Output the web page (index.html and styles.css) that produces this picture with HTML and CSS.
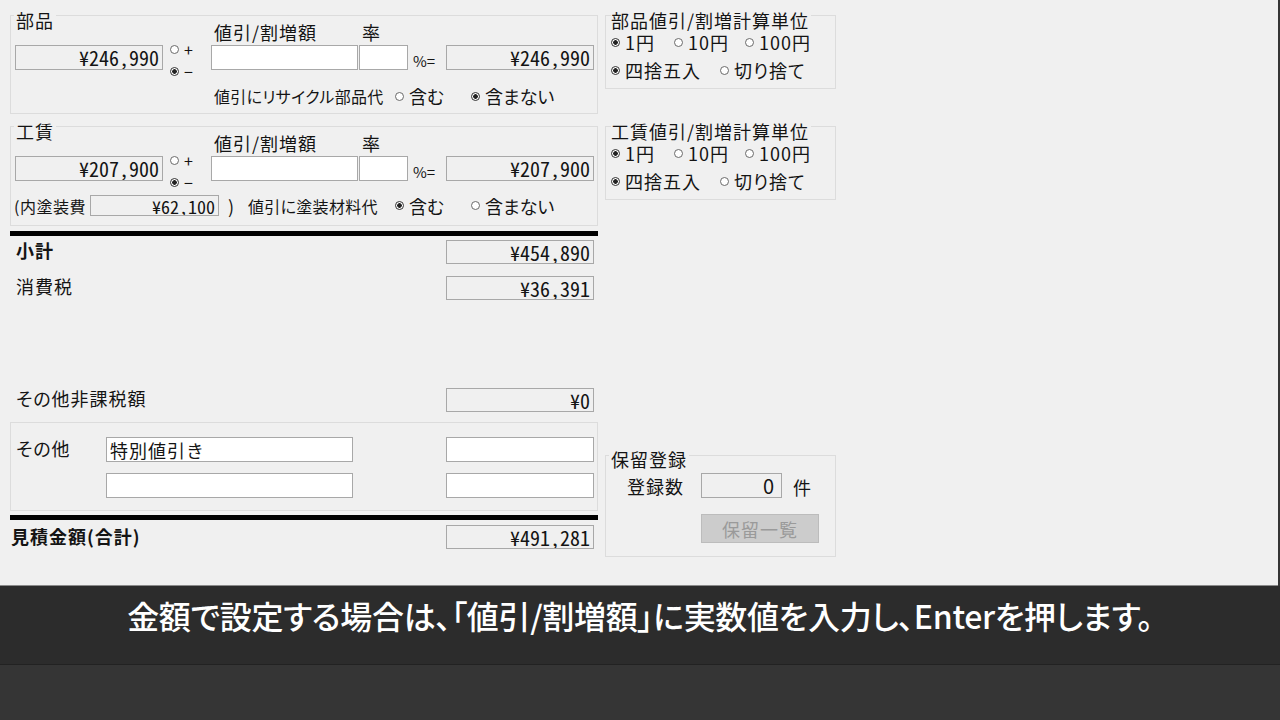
FILE: index.html
```html
<!DOCTYPE html>
<html lang="ja">
<head>
    <meta charset="UTF-8">
    <title>見積金額</title>
    <link rel="stylesheet" href="styles.css">
</head>
<body>
    <div class="app">
        <!-- 左側: 金額計算 -->
        <div class="main">
            <div class="group group-parts">
                <div class="head">
                    <div class="head-title"><span class="title">部品</span></div>
                    <span class="head-label label-amount">値引/割増額</span>
                    <span class="head-label">率</span>
                </div>
                <div class="calc-row">
                    <input class="field value first" type="text" value="¥246,990" readonly>
                    <div class="sign">
                        <label class="radio small"><input type="radio" name="parts-sign">+</label>
                        <label class="radio small"><input type="radio" name="parts-sign" checked>−</label>
                    </div>
                    <input class="field amount" type="text">
                    <input class="field rate" type="text">
                    <span class="pct">%=</span>
                    <input class="field value" type="text" value="¥246,990" readonly>
                </div>
                <div class="opt-row">
                    <span class="opt-label indent">値引にリサイクル部品代</span>
                    <label class="radio opt-first"><input type="radio" name="parts-recycle">含む</label>
                    <label class="radio"><input type="radio" name="parts-recycle" checked>含まない</label>
                </div>
            </div>

            <div class="group group-labor">
                <div class="head">
                    <div class="head-title"><span class="title">工賃</span></div>
                    <span class="head-label label-amount">値引/割増額</span>
                    <span class="head-label">率</span>
                </div>
                <div class="calc-row">
                    <input class="field value first" type="text" value="¥207,900" readonly>
                    <div class="sign">
                        <label class="radio small"><input type="radio" name="labor-sign">+</label>
                        <label class="radio small"><input type="radio" name="labor-sign" checked>−</label>
                    </div>
                    <input class="field amount" type="text">
                    <input class="field rate" type="text">
                    <span class="pct">%=</span>
                    <input class="field value" type="text" value="¥207,900" readonly>
                </div>
                <div class="opt-row paint-row">
                    <span class="paint-label">(内塗装費</span>
                    <input class="field value paint" type="text" value="¥62,100" readonly>
                    <span class="paren">)</span>
                    <span class="opt-label">値引に塗装材料代</span>
                    <label class="radio opt-first"><input type="radio" name="labor-paint" checked>含む</label>
                    <label class="radio"><input type="radio" name="labor-paint">含まない</label>
                </div>
            </div>

            <div class="rule"></div>
            <div class="sum-row">
                <span class="sum-label bold">小計</span>
                <input class="field value" type="text" value="¥454,890" readonly>
            </div>
            <div class="sum-row tax-row">
                <span class="sum-label">消費税</span>
                <input class="field value" type="text" value="¥36,391" readonly>
            </div>
            <div class="sum-row nontax-row">
                <span class="sum-label">その他非課税額</span>
                <input class="field value" type="text" value="¥0" readonly>
            </div>

            <div class="group group-other">
                <span class="other-label">その他</span>
                <div class="other-lines">
                    <div class="other-line">
                        <input class="field text" type="text" value="特別値引き">
                        <input class="field value blank" type="text">
                    </div>
                    <div class="other-line">
                        <input class="field text" type="text">
                        <input class="field value blank" type="text">
                    </div>
                </div>
            </div>

            <div class="rule rule-total"></div>
            <div class="sum-row total-row">
                <span class="total-label bold">見積金額(合計)</span>
                <input class="field value" type="text" value="¥491,281" readonly>
            </div>
        </div>

        <!-- 右側: 計算単位と保留 -->
        <div class="side">
            <div class="group unit-group">
                <div class="side-head"><span class="title">部品値引/割増計算単位</span></div>
                <div class="unit-row">
                    <label class="radio w-yen1"><input type="radio" name="parts-unit" checked>1円</label>
                    <label class="radio w-yen10"><input type="radio" name="parts-unit">10円</label>
                    <label class="radio"><input type="radio" name="parts-unit">100円</label>
                </div>
                <div class="unit-row">
                    <label class="radio w-round"><input type="radio" name="parts-round" checked>四捨五入</label>
                    <label class="radio"><input type="radio" name="parts-round">切り捨て</label>
                </div>
            </div>

            <div class="group unit-group unit-labor">
                <div class="side-head"><span class="title">工賃値引/割増計算単位</span></div>
                <div class="unit-row">
                    <label class="radio w-yen1"><input type="radio" name="labor-unit" checked>1円</label>
                    <label class="radio w-yen10"><input type="radio" name="labor-unit">10円</label>
                    <label class="radio"><input type="radio" name="labor-unit">100円</label>
                </div>
                <div class="unit-row">
                    <label class="radio w-round"><input type="radio" name="labor-round" checked>四捨五入</label>
                    <label class="radio"><input type="radio" name="labor-round">切り捨て</label>
                </div>
            </div>

            <div class="group hold-group">
                <div class="side-head"><span class="title">保留登録</span></div>
                <div class="hold-row">
                    <span class="hold-label">登録数</span>
                    <input class="field count" type="text" value="0" readonly>
                    <span class="unit">件</span>
                </div>
                <button class="hold-button" disabled>保留一覧</button>
            </div>
        </div>
    </div>

    <div class="caption">金額で設定する場合は、「値引/割増額」に実数値を入力し、Enterを押します。</div>
</body>
</html>
```

FILE: styles.css
```css
body {
    margin: 0;
    width: 1280px;
    height: 720px;
    overflow: hidden;
    background-color: #353535;
    font-family: "Noto Sans CJK JP", "Noto Sans", sans-serif;
    font-size: 18px;
    letter-spacing: 1px;
    font-feature-settings: "palt";
    color: #141414;
}

.app {
    display: flex;
    width: 1278px;
    height: 586px;
    background-color: #f0f0f0;
    border-bottom: 1px solid #8a8a8a;
    box-sizing: border-box;
    white-space: nowrap;
}

.main {
    width: 588px;
    margin: 15px 0 0 10px;
}

.side {
    display: flex;
    flex-direction: column;
    width: 231px;
    margin: 15px 0 0 7px;
    padding-bottom: 28px;
}

/* グループ枠 */
.group {
    border: 1px solid #dcdcdc;
    box-sizing: border-box;
}
.group-parts {
    padding-bottom: 8px;
}
.group-labor {
    margin-top: 12px;
    padding-bottom: 9px;
}
.title {
    display: inline-block;
    height: 18px;
    line-height: 18px;
    padding: 0 2px;
    margin-left: 3px;
    background-color: #f0f0f0;
}
.head {
    display: flex;
    height: 38px;
    margin-top: -9px;
}
.head-title {
    width: 200px;
}
.head-label {
    margin-top: 16px;
    padding-left: 3px;
    line-height: 18px;
}
.label-amount {
    width: 145px;
}

/* 入力欄 */
.field {
    box-sizing: border-box;
    flex-shrink: 0;
    height: 25px;
    margin: 0;
    padding: 0 3px;
    border: 1px solid #a8a8a8;
    background-color: #fff;
    font-family: "Noto Sans CJK JP", sans-serif;
    font-size: 20px;
    color: #141414;
    outline: none;
}
.value {
    width: 148px;
    background-color: #f0f0f0;
    text-align: right;
    letter-spacing: 0;
    font-feature-settings: "hwid";
}
.calc-row {
    display: flex;
    height: 25px;
}
.first {
    margin-left: 4px;
}
.sign {
    display: flex;
    flex-direction: column;
    flex-shrink: 0;
    width: 41px;
    height: 44px;
    margin: -7px 0 -12px 7px;
}
.amount {
    width: 147px;
}
.rate {
    width: 49px;
    margin-left: 1px;
}
.pct {
    width: 38px;
    flex-shrink: 0;
    padding-left: 5px;
    box-sizing: border-box;
    align-self: flex-end;
    font-size: 15px;
    line-height: 18px;
    letter-spacing: 0;
}

/* ラジオボタン */
.radio {
    display: inline-flex;
    align-items: center;
    flex-shrink: 0;
    line-height: 18px;
}
.radio input {
    appearance: none;
    width: 9px;
    height: 9px;
    margin: 0 5px 0 0;
    border: 1px solid #6a6a6a;
    border-radius: 50%;
    background-color: #fff;
    flex-shrink: 0;
}
.radio input:checked {
    border-color: #333;
    background: radial-gradient(circle, #222 0 2px, #fff 2.6px);
}
.radio.small {
    height: 22px;
    font-size: 16px;
    letter-spacing: 0;
}

.opt-row {
    display: flex;
    align-items: center;
    height: 18px;
    margin-top: 17px;
}
.opt-row .radio {
    letter-spacing: 0;
}
.opt-label {
    width: 181px;
    flex-shrink: 0;
    font-size: 16px;
    letter-spacing: 0.3px;
    line-height: 18px;
}
.indent {
    margin-left: 203px;
}
.opt-first {
    width: 76px;
}
.paint-row {
    height: 21px;
    margin-top: 14px;
}
.paint-label {
    width: 76px;
    flex-shrink: 0;
    margin-left: 3px;
    font-size: 16px;
    letter-spacing: 0.5px;
}
.paint {
    width: 129px;
    height: 21px;
    font-size: 18px;
}
.paren {
    width: 29px;
    flex-shrink: 0;
    padding-left: 9px;
    box-sizing: border-box;
}
.paint-row .opt-label {
    width: 147px;
}

/* 合計欄 */
.rule {
    height: 5px;
    margin-top: 5px;
    background-color: #000;
}
.sum-row {
    display: flex;
    align-items: center;
    height: 24px;
    margin-top: 4px;
}
.sum-row .value {
    height: 24px;
    margin: 0 4px 0 auto;
}
.sum-label {
    margin: 0 0 4px 6px;
}
.bold {
    font-weight: bold;
}
.tax-row {
    margin-top: 12px;
}
.nontax-row {
    margin-top: 88px;
}

.group-other {
    display: flex;
    margin-top: 10px;
    padding: 14px 0 12px;
}
.other-label {
    width: 90px;
    flex-shrink: 0;
    padding-left: 5px;
    line-height: 22px;
}
.other-lines {
    display: flex;
    flex-direction: column;
    gap: 11px;
}
.other-line {
    display: flex;
}
.text {
    width: 247px;
    text-align: left;
    font-size: 18px;
    letter-spacing: 1px;
}
.blank {
    margin-left: 93px;
    background-color: #fff;
}
.rule-total {
    margin-top: 4px;
}
.total-row {
    margin-top: 5px;
}
.total-label {
    margin: 0 0 3px 1px;
}

/* 右側 */
.side-head {
    height: 18px;
    margin-top: -9px;
}
.unit-group {
    padding: 0 0 8px 5px;
}
.unit-labor {
    margin-top: 37px;
}
.unit-row {
    display: flex;
    height: 20px;
    margin-top: 7px;
}
.unit-row + .unit-row {
    margin-top: 8px;
}
.unit-group .radio {
    line-height: 20px;
}
.w-yen1 {
    width: 63px;
}
.w-yen10 {
    width: 71px;
}
.w-round {
    width: 109px;
}
.unit-group .title {
    margin-left: 0;
    padding-left: 0;
}

.hold-group {
    margin-top: auto;
    padding-bottom: 13px;
}
.hold-group .side-head {
    margin-top: -10px;
}
.hold-row {
    display: flex;
    align-items: center;
    margin-top: 9px;
    height: 25px;
}
.hold-label {
    width: 74px;
    margin-left: 21px;
}
.count {
    width: 81px;
    text-align: right;
    padding-right: 7px;
    background-color: #f0f0f0;
}
.unit {
    margin-left: 11px;
    margin-top: 3px;
}
.hold-button {
    display: block;
    width: 118px;
    height: 29px;
    margin: 16px 0 0 95px;
    border: 1px solid #bcbcbc;
    background-color: #cccccc;
    color: #9a9a9a;
    font-family: inherit;
    font-size: 18px;
    letter-spacing: 1px;
}

/* 字幕 */
.caption {
    height: 79px;
    padding-top: 11px;
    box-sizing: border-box;
    background-color: #2c2c2c;
    border-bottom: 1px solid #222;
    color: #fff;
    font-size: 32px;
    font-weight: 500;
    line-height: 36px;
    letter-spacing: -0.3px;
    text-align: center;
}
```
